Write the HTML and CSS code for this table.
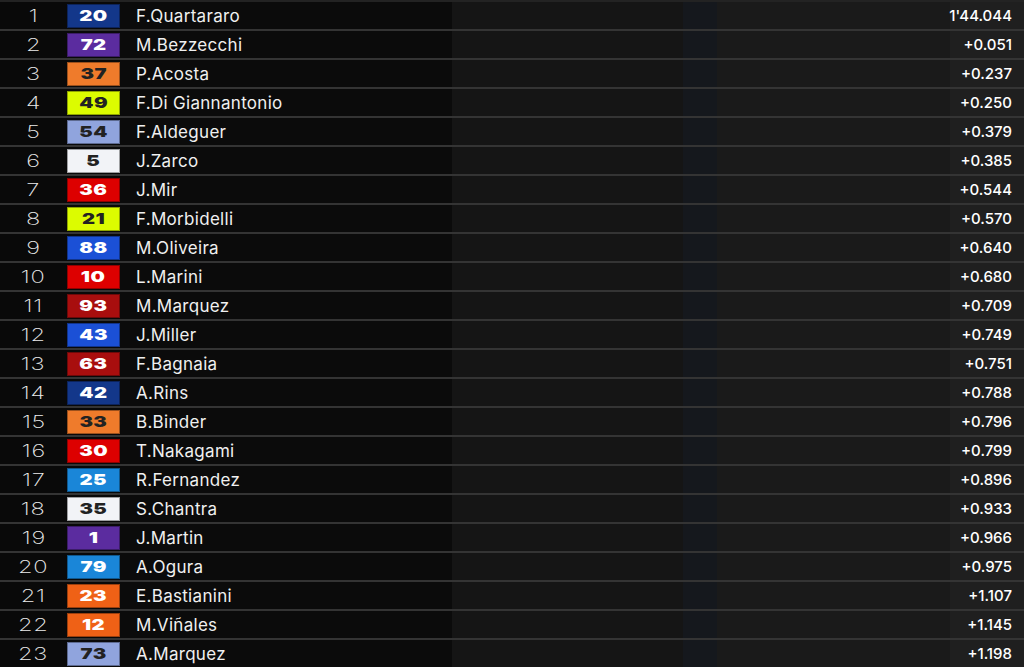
FILE: index.html
```html
<!DOCTYPE html>
<html>
<head>
<meta charset="utf-8">
<link rel="stylesheet" href="styles.css">
</head>
<body>
<div class="board">
  <div class="topbar"></div>
  <div class="row"><div class="pos"><span>1</span></div><div class="num"><span class="badge navy"><b>20</b></span></div><div class="name">F.Quartararo</div><div class="b1"></div><div class="b2"></div><div class="b3"></div><div class="time">1'44.044</div></div>
  <div class="row"><div class="pos"><span>2</span></div><div class="num"><span class="badge purple"><b>72</b></span></div><div class="name">M.Bezzecchi</div><div class="b1"></div><div class="b2"></div><div class="b3"></div><div class="time">+0.051</div></div>
  <div class="row"><div class="pos"><span>3</span></div><div class="num"><span class="badge orange dark"><b>37</b></span></div><div class="name">P.Acosta</div><div class="b1"></div><div class="b2"></div><div class="b3"></div><div class="time">+0.237</div></div>
  <div class="row"><div class="pos"><span>4</span></div><div class="num"><span class="badge lime dark"><b>49</b></span></div><div class="name">F.Di Giannantonio</div><div class="b1"></div><div class="b2"></div><div class="b3"></div><div class="time">+0.250</div></div>
  <div class="row"><div class="pos"><span>5</span></div><div class="num"><span class="badge peri dark"><b>54</b></span></div><div class="name">F.Aldeguer</div><div class="b1"></div><div class="b2"></div><div class="b3"></div><div class="time">+0.379</div></div>
  <div class="row"><div class="pos"><span>6</span></div><div class="num"><span class="badge white dark"><b>5</b></span></div><div class="name">J.Zarco</div><div class="b1"></div><div class="b2"></div><div class="b3"></div><div class="time">+0.385</div></div>
  <div class="row"><div class="pos"><span>7</span></div><div class="num"><span class="badge red"><b>36</b></span></div><div class="name">J.Mir</div><div class="b1"></div><div class="b2"></div><div class="b3"></div><div class="time">+0.544</div></div>
  <div class="row"><div class="pos"><span>8</span></div><div class="num"><span class="badge lime dark"><b>21</b></span></div><div class="name">F.Morbidelli</div><div class="b1"></div><div class="b2"></div><div class="b3"></div><div class="time">+0.570</div></div>
  <div class="row"><div class="pos"><span>9</span></div><div class="num"><span class="badge blue"><b>88</b></span></div><div class="name">M.Oliveira</div><div class="b1"></div><div class="b2"></div><div class="b3"></div><div class="time">+0.640</div></div>
  <div class="row"><div class="pos"><span>10</span></div><div class="num"><span class="badge red"><b>10</b></span></div><div class="name">L.Marini</div><div class="b1"></div><div class="b2"></div><div class="b3"></div><div class="time">+0.680</div></div>
  <div class="row"><div class="pos"><span>11</span></div><div class="num"><span class="badge darkred"><b>93</b></span></div><div class="name">M.Marquez</div><div class="b1"></div><div class="b2"></div><div class="b3"></div><div class="time">+0.709</div></div>
  <div class="row"><div class="pos"><span>12</span></div><div class="num"><span class="badge blue"><b>43</b></span></div><div class="name">J.Miller</div><div class="b1"></div><div class="b2"></div><div class="b3"></div><div class="time">+0.749</div></div>
  <div class="row"><div class="pos"><span>13</span></div><div class="num"><span class="badge darkred"><b>63</b></span></div><div class="name">F.Bagnaia</div><div class="b1"></div><div class="b2"></div><div class="b3"></div><div class="time">+0.751</div></div>
  <div class="row"><div class="pos"><span>14</span></div><div class="num"><span class="badge navy"><b>42</b></span></div><div class="name">A.Rins</div><div class="b1"></div><div class="b2"></div><div class="b3"></div><div class="time">+0.788</div></div>
  <div class="row"><div class="pos"><span>15</span></div><div class="num"><span class="badge orange dark"><b>33</b></span></div><div class="name">B.Binder</div><div class="b1"></div><div class="b2"></div><div class="b3"></div><div class="time">+0.796</div></div>
  <div class="row"><div class="pos"><span>16</span></div><div class="num"><span class="badge red"><b>30</b></span></div><div class="name">T.Nakagami</div><div class="b1"></div><div class="b2"></div><div class="b3"></div><div class="time">+0.799</div></div>
  <div class="row"><div class="pos"><span>17</span></div><div class="num"><span class="badge sky"><b>25</b></span></div><div class="name">R.Fernandez</div><div class="b1"></div><div class="b2"></div><div class="b3"></div><div class="time">+0.896</div></div>
  <div class="row"><div class="pos"><span>18</span></div><div class="num"><span class="badge white dark"><b>35</b></span></div><div class="name">S.Chantra</div><div class="b1"></div><div class="b2"></div><div class="b3"></div><div class="time">+0.933</div></div>
  <div class="row"><div class="pos"><span>19</span></div><div class="num"><span class="badge purple"><b>1</b></span></div><div class="name">J.Martin</div><div class="b1"></div><div class="b2"></div><div class="b3"></div><div class="time">+0.966</div></div>
  <div class="row"><div class="pos"><span>20</span></div><div class="num"><span class="badge sky"><b>79</b></span></div><div class="name">A.Ogura</div><div class="b1"></div><div class="b2"></div><div class="b3"></div><div class="time">+0.975</div></div>
  <div class="row"><div class="pos"><span>21</span></div><div class="num"><span class="badge ktm"><b>23</b></span></div><div class="name">E.Bastianini</div><div class="b1"></div><div class="b2"></div><div class="b3"></div><div class="time">+1.107</div></div>
  <div class="row"><div class="pos"><span>22</span></div><div class="num"><span class="badge ktm"><b>12</b></span></div><div class="name">M.Viñales</div><div class="b1"></div><div class="b2"></div><div class="b3"></div><div class="time">+1.145</div></div>
  <div class="row"><div class="pos"><span>23</span></div><div class="num"><span class="badge peri dark"><b>73</b></span></div><div class="name">A.Marquez</div><div class="b1"></div><div class="b2"></div><div class="b3"></div><div class="time">+1.198</div></div>
</div>
</body>
</html>
```

FILE: styles.css
```css
* { box-sizing: border-box; }
html, body {
  margin: 0;
  padding: 0;
  background: #0a0a0a;
  width: 1024px;
  height: 667px;
  overflow: hidden;
}
.board {
  display: flex;
  flex-direction: column;
  font-family: "Inter", "Noto Sans", sans-serif;
  color: #f0f0f0;
}
.topbar {
  height: 2px;
  background: #232323;
}
.row {
  display: grid;
  grid-template-columns: 67px 53px 332px 231px 34px 233px 74px;
  height: 29px;
  border-bottom: 2px solid #343434;
}
.row > div {
  display: flex;
  align-items: center;
}
.pos {
  justify-content: center;
  background: #090909;
  font-family: "Inter", "DejaVu Sans", sans-serif;
  font-weight: 200;
  font-size: 17.5px;
  font-variant-numeric: lining-nums;
  color: #ececec;
}
.pos span {
  display: inline-block;
  transform: scaleX(1.35);
  letter-spacing: 0.5px;
}
.num {
  background: #090909;
}
.badge {
  width: 53px;
  height: 24px;
  display: flex;
  align-items: center;
  justify-content: center;
  border: 1px solid rgba(0, 0, 0, 0.35);
  font-family: "Inter", "DejaVu Sans", sans-serif;
  font-size: 15px;
  color: #ffffff;
}
.badge b {
  display: inline-block;
  font-weight: 900;
  transform: scaleX(1.35);
  letter-spacing: 0.3px;
}
.badge.dark { color: #222222; }
.navy { background: #13378a; }
.purple { background: #5b2c9f; }
.orange { background: #ef7b2b; }
.lime { background: #dcfc00; }
.peri { background: #90a4dd; }
.white { background: #f2f3f7; }
.red { background: #dd0000; }
.blue { background: #1b50d6; }
.darkred { background: #a80e0e; }
.sky { background: #1a86d8; }
.ktm { background: #ef6116; }
.name {
  background: #0b0b0b;
  padding-left: 16px;
  font-size: 17px;
  letter-spacing: 0.3px;
  font-weight: 400;
  white-space: nowrap;
}
.b1 { background: #151515; }
.b2 { background: #15181d; }
.b3 { background: #1a1a1a; }
.time {
  background: #1f1f1f;
  justify-content: flex-end;
  padding-right: 12px;
  font-size: 15px;
  font-weight: 500;
  color: #ffffff;
  white-space: nowrap;
}
```
